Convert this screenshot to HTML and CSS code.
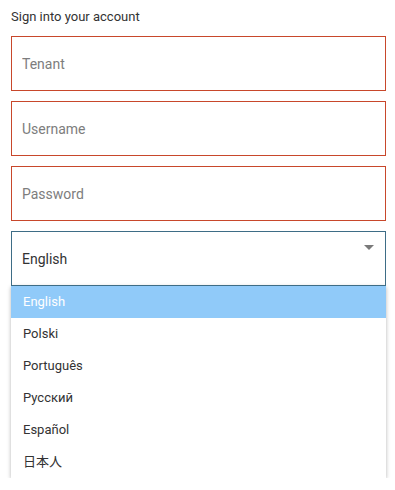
FILE: index.html
```html
<!DOCTYPE html>
<html lang="en">
<head>
    <meta charset="UTF-8">
    <meta name="viewport" content="width=device-width, initial-scale=1.0">
    <title>Sign in</title>
    <link rel="stylesheet" href="styles.css">
</head>
<body>
    <div class="login">
        <h1 class="title">Sign into your account</h1>

        <form class="login-form">
            <input class="field invalid" type="text" name="tenant" placeholder="Tenant">
            <input class="field invalid" type="text" name="username" placeholder="Username">
            <input class="field invalid" type="password" name="password" placeholder="Password">

            <div class="select-wrap">
                <div class="select">
                    <span class="select-value">English</span>
                    <span class="select-arrow"></span>
                </div>
                <ul class="menu">
                    <li class="menu-item selected">English</li>
                    <li class="menu-item">Polski</li>
                    <li class="menu-item">Português</li>
                    <li class="menu-item">Русский</li>
                    <li class="menu-item">Español</li>
                    <li class="menu-item">日本人</li>
                </ul>
            </div>
        </form>
    </div>
</body>
</html>
```

FILE: styles.css
```css
body {
    margin: 0;
    font-family: Roboto, "Liberation Sans", "Noto Sans CJK JP", sans-serif;
    background: #fff;
    color: #333;
}
.login {
    width: 375px;
    padding: 9px 0 0 11px;
}
.title {
    margin: 0 0 11px;
    font-size: 13px;
    line-height: 16px;
    font-weight: normal;
    color: #333;
}
.login-form {
    display: flex;
    flex-direction: column;
    gap: 10px;
}
.field {
    box-sizing: border-box;
    width: 100%;
    height: 55px;
    margin: 0;
    padding: 0 10px;
    border: 1px solid #ccc;
    font-family: inherit;
    font-size: 14px;
    color: #333;
    background: #fff;
    outline: none;
}
.field.invalid {
    border-color: #c8472b;
}
.field::placeholder {
    color: #7d7d7d;
}
.select {
    box-sizing: border-box;
    height: 55px;
    padding: 0 10px;
    border: 1px solid #3e6d86;
    display: flex;
    align-items: center;
    font-size: 14px;
    color: #333;
    position: relative;
}
.select-arrow {
    position: absolute;
    right: 11px;
    top: 13px;
    width: 0;
    height: 0;
    border-left: 5px solid transparent;
    border-right: 5px solid transparent;
    border-top: 5px solid #7a7a7a;
}
.menu {
    margin: 0;
    padding: 0;
    list-style: none;
    background: #fff;
    box-shadow: 0 1px 4px rgba(0,0,0,0.3);
}
.menu-item {
    height: 32px;
    line-height: 32px;
    padding: 0 12px;
    font-size: 13px;
    color: #333;
}
.menu-item.selected {
    background-color: #90caf9;
    color: #fff;
}
```
